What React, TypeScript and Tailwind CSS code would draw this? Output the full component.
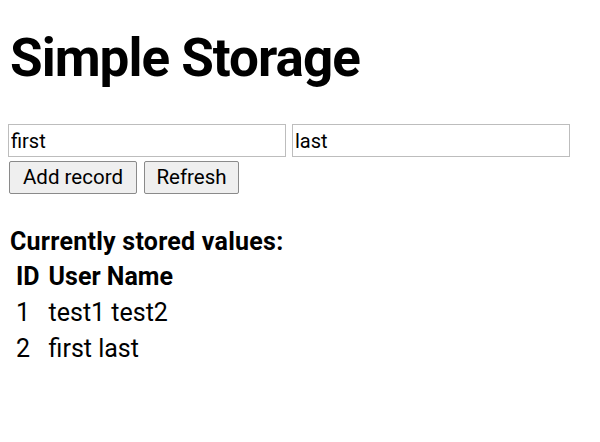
export default function App() {
  return (
    <div className="bg-white w-[600px] h-[442px] text-black" style={{ fontFamily: "Roboto, sans-serif" }}>
      <div className="pl-[8px] pt-[26px]">
        <h1 className="text-[53px] font-bold leading-[64px] tracking-[-1px] m-0 ml-[2px]">Simple Storage</h1>
        <div className="mt-[34px] flex gap-[6px]">
          <input
            defaultValue="first"
            className="w-[278px] h-[33px] border border-[#bdbdbd] px-[2px] text-[20px] leading-none outline-none"
          />
          <input
            defaultValue="last"
            className="w-[278px] h-[33px] border border-[#bdbdbd] px-[2px] text-[20px] leading-none outline-none"
          />
        </div>
        <div className="mt-[4px] flex gap-[7px] ml-[1px]">
          <button className="h-[33px] px-[13px] border border-[#8a8a8a] rounded-[2px] bg-[#efefef] text-[20.5px] leading-none">
            Add record
          </button>
          <button className="h-[33px] px-[11.5px] border border-[#8a8a8a] rounded-[2px] bg-[#efefef] text-[20.5px] leading-none">
            Refresh
          </button>
        </div>
        <h3 className="mt-[33px] ml-[2px] text-[25px] font-bold leading-[30px] tracking-[0.25px]">Currently stored values:</h3>
        <table className="ml-[1px] border-separate border-spacing-x-[5px] border-spacing-y-[4px] text-[25px]">
          <thead>
            <tr>
              <th className="text-left font-bold px-[2px] leading-[32px]">ID</th>
              <th className="text-left font-bold px-[2px] leading-[32px]">User Name</th>
            </tr>
          </thead>
          <tbody>
            <tr>
              <td className="px-[2px] leading-[32px]">1</td>
              <td className="px-[2px] leading-[32px]">test1 test2</td>
            </tr>
            <tr>
              <td className="px-[2px] leading-[32px]">2</td>
              <td className="px-[2px] leading-[32px]">first last</td>
            </tr>
          </tbody>
        </table>
      </div>
    </div>
  );
}
